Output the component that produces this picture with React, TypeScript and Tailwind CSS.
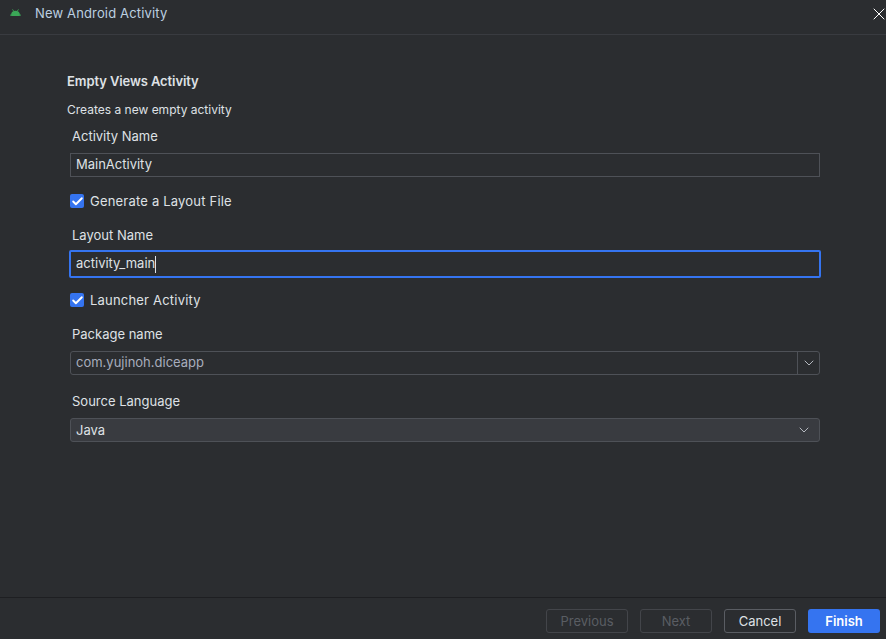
import { Check, ChevronDown, X } from "lucide-react";

function FieldLabel({ text, className }: { text: string; className: string }) {
  return <div className={`pl-[2px] h-[18px] leading-[18px] text-[13px] text-[#dfe1e5] ${className}`}>{text}</div>;
}

function CheckRow({ text, className }: { text: string; className: string }) {
  return (
    <div className={`flex items-center gap-[6px] h-[16px] ${className}`}>
      <span className="flex items-center justify-center w-[14px] h-[14px] mb-[2px] rounded-[2px] bg-[#3574f0]">
        <Check size={13} strokeWidth={3.5} className="text-white" />
      </span>
      <span className="text-[13px] tracking-[0.2px] text-[#dfe1e5]">{text}</span>
    </div>
  );
}

function FooterButton({ text, width, kind }: { text: string; width: string; kind: "off" | "on" | "main" }) {
  const look =
    kind === "off"
      ? "border border-[#43454a] text-[#5a5d63]"
      : kind === "on"
        ? "border border-[#5a5d63] text-[#dfe1e5]"
        : "bg-[#3574f0] text-white font-semibold";
  return (
    <button className={`h-[24px] pt-px rounded-[3px] text-[13px] flex items-center justify-center ${width} ${look}`}>{text}</button>
  );
}

export default function App() {
  return (
    <div className="w-[886px] h-[639px] flex flex-col bg-[#2b2d30] font-['Inter',sans-serif] overflow-hidden">
      <header className="h-[35px] shrink-0 flex items-center border-b border-[#393b40] pb-[6px]">
        <svg viewBox="0 0 12 8" className="w-[11px] h-[7px] ml-[10px] mt-[-4px]" aria-hidden="true">
          <path d="M1 8V6.2C1 3.8 3.2 2 6 2s5 1.8 5 4.2V8z" fill="#3ba757" />
          <path d="M2.6 0.4L4 2.6M9.4 0.4L8 2.6" stroke="#3ba757" strokeWidth="1" />
          <path d="M0 7h1M11 7h1" stroke="#3ba757" strokeWidth="1.5" />
        </svg>
        <span className="ml-[14px] text-[13px] tracking-[0.15px] text-[#bcd0e0]">New Android Activity</span>
        <X size={20} strokeWidth={1.2} className="ml-auto mr-[-3px] text-white" />
      </header>

      <main className="flex-1 pl-[67px] pr-[66px]">
        <h1 className="mt-[37px] h-[18px] leading-[18px] text-[13px] font-semibold tracking-[-0.1px] text-[#dfe1e5]">Empty Views Activity</h1>
        <p className="mt-[12px] h-[16px] leading-[16px] text-[12px] text-[#dfe1e5]">Creates a new empty activity</p>

        <div className="pl-[3px]">
          <FieldLabel text="Activity Name" className="mt-[9px]" />
          <div className="mt-[8px] h-[24px] flex items-center px-[5px] border border-[#4e5157] text-[13px] text-[#dfe1e5]">
            MainActivity
          </div>
          <CheckRow text="Generate a Layout File" className="mt-[17px]" />
          <FieldLabel text="Layout Name" className="mt-[16px]" />
          <div className="mt-[6px] -mx-px h-[28px] flex items-center px-[5px] border-2 border-[#3574f0] rounded-[2px] text-[13px] text-[#dfe1e5]">
            activity_main
            <span className="w-px h-[17px] bg-[#dfe1e5]" />
          </div>
          <CheckRow text="Launcher Activity" className="mt-[15px]" />
          <FieldLabel text="Package name" className="mt-[16px]" />
          <div className="mt-[8px] h-[24px] flex items-center border border-[#4e5157] rounded-[3px] text-[13px] text-[#a8adbd]">
            <span className="flex-1 px-[5px]">com.yujinoh.diceapp</span>
            <span className="w-[22px] h-full flex items-center justify-center border-l border-[#4e5157]">
              <ChevronDown size={16} strokeWidth={1.5} className="text-[#b4b8bf]" />
            </span>
          </div>
          <FieldLabel text="Source Language" className="mt-[17px]" />
          <div className="mt-[8px] h-[24px] flex items-center justify-between pl-[5px] pr-[7px] bg-[#393b40] border border-[#4e5157] rounded-[3px] text-[13px] text-[#dfe1e5]">
            <span className="pt-px">Java</span>
            <ChevronDown size={16} strokeWidth={1.5} className="text-[#b4b8bf]" />
          </div>
        </div>
      </main>

      <footer className="h-[42px] shrink-0 flex items-start justify-end gap-[12px] pt-[11px] pr-[6px] border-t border-[#1e1f22]">
        <FooterButton text="Previous" width="w-[82px]" kind="off" />
        <FooterButton text="Next" width="w-[72px]" kind="off" />
        <FooterButton text="Cancel" width="w-[72px]" kind="on" />
        <FooterButton text="Finish" width="w-[72px]" kind="main" />
      </footer>
    </div>
  );
}
